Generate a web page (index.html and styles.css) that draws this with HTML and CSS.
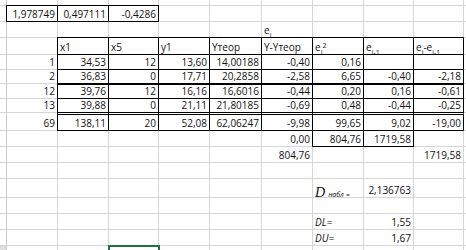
FILE: index.html
```html
<!DOCTYPE html>
<html lang="ru">
<head>
<meta charset="utf-8">
<title>Sheet</title>
<link rel="stylesheet" href="styles.css">
</head>
<body>
<div class="sheet">
  <!-- top partial row -->
  <div class="c h"></div><div class="c"></div><div class="c"></div><div class="c"></div><div class="c"></div><div class="c"></div><div class="c"></div><div class="c"></div><div class="c"></div><div class="c"></div><div class="c"></div>
  <!-- coefficients -->
  <div class="c h"></div><div class="c b r">1,978749</div><div class="c b r">0,497111</div><div class="c b r">-0,4286</div><div class="c"></div><div class="c"></div><div class="c"></div><div class="c"></div><div class="c"></div><div class="c"></div><div class="c"></div>
  <!-- e_i label -->
  <div class="c h"></div><div class="c"></div><div class="c"></div><div class="c"></div><div class="c"></div><div class="c"></div><div class="c">e<span class="lo">i</span></div><div class="c"></div><div class="c"></div><div class="c"></div><div class="c"></div>
  <!-- header -->
  <div class="c h"></div><div class="c"></div><div class="c b">x1</div><div class="c b">x5</div><div class="c b">y1</div><div class="c b">Yтеор</div><div class="c b">Y-Yтеор</div><div class="c b">e<span class="lo">i</span><span class="hi">2</span></div><div class="c b">e<span class="lo">i-1</span></div><div class="c b">e<span class="lo">i</span>-e<span class="lo">i-1</span></div><div class="c"></div>
  <!-- 1 -->
  <div class="c h"></div><div class="c r">1</div><div class="c b r">34,53</div><div class="c b r">12</div><div class="c b r">13,60</div><div class="c b r">14,00188</div><div class="c b r">-0,40</div><div class="c b r">0,16</div><div class="c b r"></div><div class="c b r"></div><div class="c"></div>
  <!-- 2 -->
  <div class="c h"></div><div class="c r">2</div><div class="c b r">36,83</div><div class="c b r">0</div><div class="c b r">17,71</div><div class="c b r">20,2858</div><div class="c b r">-2,58</div><div class="c b r">6,65</div><div class="c b r">-0,40</div><div class="c b r">-2,18</div><div class="c"></div>
  <!-- 12 -->
  <div class="c h"></div><div class="c r">12</div><div class="c b t r">39,76</div><div class="c b t r">12</div><div class="c b t r">16,16</div><div class="c b t r">16,6016</div><div class="c b t r">-0,44</div><div class="c b t r">0,20</div><div class="c b t r">0,16</div><div class="c b t r">-0,61</div><div class="c"></div>
  <!-- 13 -->
  <div class="c h"></div><div class="c r">13</div><div class="c b r">39,88</div><div class="c b r">0</div><div class="c b r">21,11</div><div class="c b r">21,80185</div><div class="c b r">-0,69</div><div class="c b r">0,48</div><div class="c b r">-0,44</div><div class="c b r">-0,25</div><div class="c"></div>
  <!-- 69 -->
  <div class="c h"></div><div class="c r">69</div><div class="c b dbl r">138,11</div><div class="c b dbl r">20</div><div class="c b dbl r">52,08</div><div class="c b dbl r">62,06247</div><div class="c b dbl r">-9,98</div><div class="c b dbl r">99,65</div><div class="c b dbl r">9,02</div><div class="c b dbl r">-19,00</div><div class="c"></div>
  <!-- sums -->
  <div class="c h"></div><div class="c"></div><div class="c"></div><div class="c"></div><div class="c"></div><div class="c"></div><div class="c r">0,00</div><div class="c b r">804,76</div><div class="c b r">1719,58</div><div class="c"></div><div class="c"></div>
  <div class="c h"></div><div class="c"></div><div class="c"></div><div class="c"></div><div class="c"></div><div class="c"></div><div class="c r">804,76</div><div class="c"></div><div class="c"></div><div class="c r">1719,58</div><div class="c"></div>
  <div class="c h"></div><div class="c"></div><div class="c"></div><div class="c"></div><div class="c"></div><div class="c"></div><div class="c"></div><div class="c"></div><div class="c"></div><div class="c"></div><div class="c"></div>
  <!-- D -->
  <div class="c h"></div><div class="c"></div><div class="c"></div><div class="c"></div><div class="c"></div><div class="c"></div><div class="c"></div><div class="c dcell"><span class="dv">D</span><span class="dn">набл =</span></div><div class="c r">2,136763</div><div class="c"></div><div class="c"></div>
  <div class="c h"></div><div class="c"></div><div class="c"></div><div class="c"></div><div class="c"></div><div class="c"></div><div class="c"></div><div class="c"></div><div class="c"></div><div class="c"></div><div class="c"></div>
  <div class="c h"></div><div class="c"></div><div class="c"></div><div class="c"></div><div class="c"></div><div class="c"></div><div class="c"></div><div class="c it">DL=</div><div class="c r">1,55</div><div class="c"></div><div class="c"></div>
  <div class="c h"></div><div class="c"></div><div class="c"></div><div class="c"></div><div class="c"></div><div class="c"></div><div class="c"></div><div class="c it">DU=</div><div class="c r">1,67</div><div class="c"></div><div class="c"></div>
  <!-- selected row -->
  <div class="c h hs"></div><div class="c"></div><div class="c"></div><div class="c sel"></div><div class="c"></div><div class="c"></div><div class="c"></div><div class="c"></div><div class="c"></div><div class="c"></div><div class="c"></div>
</div>
</body>
</html>
```
FILE: styles.css
```css
html, body {
  margin: 0;
  padding: 0;
  background: #fff;
}

body {
  font-family: "Open Sans", "Liberation Sans", sans-serif;
  font-size: 10px;
  color: #111;
}

.sheet {
  display: grid;
  grid-template-columns: 7px 51px 51px 50px 51px 52px 51px 51px 50px 50px 1fr;
  grid-template-rows: 6px 16px 16px 17px 15px 14px 15px 14px 18px 16px 16px 16px 19px 16px 16px 16px 16px;
  width: 466px;
  height: 250px;
  overflow: hidden;
}

.c {
  box-sizing: border-box;
  border-right: 1px solid #d6d6d6;
  border-bottom: 1px solid #d6d6d6;
  display: flex;
  align-items: flex-end;
  padding: 0 2px;
  line-height: 13px;
  white-space: nowrap;
  min-width: 0;
}

.r {
  justify-content: flex-end;
}

.b {
  border-right-color: #000;
  border-bottom-color: #000;
  box-shadow: -1px 0 0 #000, 0 -1px 0 #000, -1px -1px 0 #000;
}

.t {
  border-top: 1px solid #000;
}

.dbl {
  border-top: 1px solid #fff;
  box-shadow: -1px 0 0 #000, 0 -1px 0 #000, -1px -1px 0 #000, inset 0 1px 0 #000;
}

.h {
  padding: 0;
  border-right-color: #c8c8c8;
}

.hs {
  background: #dedede;
}

.lo {
  font-size: 7px;
  line-height: 7px;
  position: relative;
  top: 2px;
}

.hi {
  font-size: 7px;
  line-height: 7px;
  position: relative;
  top: -5px;
}

.dcell {
  overflow: visible;
}

.dv {
  font-family: "Liberation Serif", serif;
  font-style: italic;
  font-size: 14px;
  line-height: 13px;
  position: relative;
  top: 2px;
}

.dn {
  font-style: italic;
  font-size: 7px;
  line-height: 7px;
  margin-left: 3px;
  position: relative;
  top: 1px;
}

.it {
  font-style: italic;
}

.sel {
  outline: 2px solid #217346;
  outline-offset: -1px;
}
```
